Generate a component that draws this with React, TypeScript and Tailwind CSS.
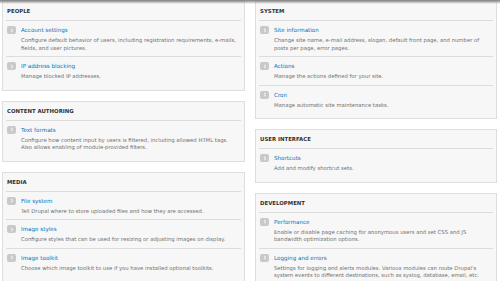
import React from "react";

// Drupal "Configuration" admin page, Seven theme, shown at a small scale

type Item = {
  title: string;
  lines: string[]; // description, one entry per rendered line
};

type Block = {
  title: string;
  items: Item[];
};

const LEFT: Block[] = [
  {
    title: "People",
    items: [
      {
        title: "Account settings",
        lines: [
          "Configure default behavior of users, including registration requirements, e-mails,",
          "fields, and user pictures.",
        ],
      },
      { title: "IP address blocking", lines: ["Manage blocked IP addresses."] },
    ],
  },
  {
    title: "Content authoring",
    items: [
      {
        title: "Text formats",
        lines: [
          "Configure how content input by users is filtered, including allowed HTML tags.",
          "Also allows enabling of module-provided filters.",
        ],
      },
    ],
  },
  {
    title: "Media",
    items: [
      { title: "File system", lines: ["Tell Drupal where to store uploaded files and how they are accessed."] },
      { title: "Image styles", lines: ["Configure styles that can be used for resizing or adjusting images on display."] },
      { title: "Image toolkit", lines: ["Choose which image toolkit to use if you have installed optional toolkits."] },
    ],
  },
];

const RIGHT: Block[] = [
  {
    title: "System",
    items: [
      {
        title: "Site information",
        lines: [
          "Change site name, e-mail address, slogan, default front page, and number of",
          "posts per page, error pages.",
        ],
      },
      { title: "Actions", lines: ["Manage the actions defined for your site."] },
      { title: "Cron", lines: ["Manage automatic site maintenance tasks."] },
    ],
  },
  {
    title: "User interface",
    items: [{ title: "Shortcuts", lines: ["Add and modify shortcut sets."] }],
  },
  {
    title: "Development",
    items: [
      {
        title: "Performance",
        lines: [
          "Enable or disable page caching for anonymous users and set CSS and JS",
          "bandwidth optimization options.",
        ],
      },
      {
        title: "Logging and errors",
        lines: [
          "Settings for logging and alerts modules. Various modules can route Drupal's",
          "system events to different destinations, such as syslog, database, email, etc.",
        ],
      },
    ],
  },
];

function Arrow() {
  return (
    <span className="mt-[1px] ml-[1px] flex h-[8px] w-[9px] items-center justify-center rounded-[2px] bg-[#c9c9c9]">
      <svg width="4" height="5" viewBox="0 0 4 5">
        <path d="M1 0.8 L2.8 2.5 L1 4.2" fill="none" stroke="#fff" strokeWidth="1" />
      </svg>
    </span>
  );
}

function Panel({ block }: { block: Block }) {
  return (
    <div className="border border-[#dedede] bg-[#f7f7f7] px-[3px] pb-[5px]">
      <h3 className="h-[19px] border-b border-[#dcdcdc] pl-[1px] text-[5.4px] font-bold uppercase leading-[18px] text-[#333]">
        {block.title}
      </h3>
      {block.items.map((it, i) => (
        <div
          key={it.title}
          className={`flex pt-[4px] pb-[4px] ${i < block.items.length - 1 ? "border-b border-[#dcdcdc]" : ""}`}
        >
          <div className="w-[15px] shrink-0">
            <Arrow />
          </div>
          <div>
            <a className="block text-[5.6px] leading-[10px] text-[#0074bd]">{it.title}</a>
            <div className="mt-[2px]">
              {it.lines.map((l) => (
                <p key={l} className="whitespace-nowrap text-[5.3px] leading-[7.5px] text-[#707070]">
                  {l}
                </p>
              ))}
            </div>
          </div>
        </div>
      ))}
    </div>
  );
}

export default function App() {
  return (
    <div
      className="relative h-[281px] w-[500px] overflow-hidden bg-white"
      style={{ fontFamily: '"DejaVu Sans", Verdana, sans-serif' }}
    >
      {/* toolbar shadow */}
      <div className="absolute inset-x-0 top-0 z-10 h-[4px] bg-gradient-to-b from-[#7d7d7d] to-transparent" />

      <div className="flex gap-[10px] px-[2px] pt-[1px]">
        <div className="flex w-[243px] flex-col gap-[10px]">
          {LEFT.map((b) => (
            <Panel key={b.title} block={b} />
          ))}
        </div>
        <div className="flex w-[242px] flex-col gap-[10px]">
          {RIGHT.map((b) => (
            <Panel key={b.title} block={b} />
          ))}
        </div>
      </div>
    </div>
  );
}
